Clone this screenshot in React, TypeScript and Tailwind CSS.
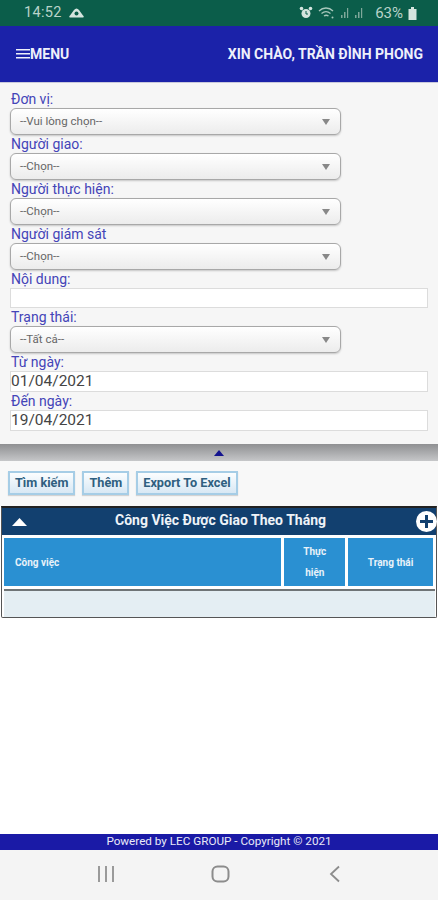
const font = { fontFamily: '"Roboto", "Liberation Sans", sans-serif' };

function Label({ children }: { children: React.ReactNode }) {
  return <div className="h-[18px] text-[14px] leading-[18px] text-[#4444b8] pl-[1px]">{children}</div>;
}

function Select({ text }: { text: string }) {
  return (
    <div className="w-[331px] h-[27px] rounded-[6px] border border-[#a8a8a8] bg-gradient-to-b from-white to-[#ececec] flex items-center justify-between pl-[9px] pr-[10px] shadow-[0_1px_2px_rgba(0,0,0,0.2)]">
      <span className="text-[11.5px] text-[#666]">{text}</span>
      <svg width="8" height="6" viewBox="0 0 8 6"><path d="M0 0h8L4 6z" fill="#888" /></svg>
    </div>
  );
}

function Input({ text, short }: { text?: string; short?: boolean }) {
  return (
    <div className={`w-[418px] ${short ? "h-[20px]" : "h-[21px]"} bg-white border border-[#dcdcdc] flex items-center text-[15.5px] text-[#444]`}>
      {text}
    </div>
  );
}

function Btn({ children }: { children: React.ReactNode }) {
  return (
    <div className="h-[24px] px-[5px] flex items-center border-2 border-[#a6cde6] bg-gradient-to-b from-[#fbfdfe] to-[#d8e8f4] text-[12.7px] font-bold text-[#2f5f80] shadow-[0_1px_1px_rgba(0,0,0,0.15)]">
      {children}
    </div>
  );
}

export default function App() {
  return (
    <div style={font} className="w-[438px] h-[900px] flex flex-col bg-white overflow-hidden">
      <div className="h-[26px] bg-[#0b5d4a] flex items-center justify-between pl-[24px] pr-[21px] text-[#b9d3c9]">
        <div className="flex items-center gap-[7px]">
          <span className="text-[14.5px] tracking-[0.3px]">14:52</span>
          <svg width="15" height="10" viewBox="0 0 15 10"><path d="M1 9.500C0 9.500 0 8 1 7.500L5 2C6.500 0 8.500 0 10 2L14 7.500C15 8 15 9.500 14 9.500z" fill="#d5e5df" /><circle cx="7.500" cy="5.500" r="2" fill="#0b5d4a" /></svg>
        </div>
        <div className="flex items-center gap-[5px]">
          <svg width="14" height="14" viewBox="0 0 14 14"><circle cx="7" cy="7.500" r="4.500" fill="#d5e5df" /><circle cx="2.500" cy="2.500" r="1.800" fill="#d5e5df" /><circle cx="11.500" cy="2.500" r="1.800" fill="#d5e5df" /><path d="M7 5v3h2" stroke="#0b5d4a" fill="none" /></svg>
          <svg width="17" height="13" viewBox="0 0 17 13" fill="none" stroke="#a9c8bc" strokeWidth="1.300"><path d="M1 4c4-4 10-4 14 0M3.500 6.500c3-2.500 6-2.500 9 0M6 9c1.500-1 3-1 4.500 0" /><circle cx="14.500" cy="10.500" r="1" fill="#a9c8bc" stroke="none" /></svg>
          <svg width="26" height="12" viewBox="0 0 26 12" fill="#7fa89a"><path d="M1 11h1.500V8H1zM4 11h1.500V5H4zM7 11h1.200V1H7zM15 11h1.500V8H15zM18 11h1.500V5H18zM21 11h1.200V1H21z" /></svg>
          <span className="text-[15px] ml-[4px]">63%</span>
          <svg width="9" height="13" viewBox="0 0 9 13"><path d="M3 0h3v2H3z" fill="#d5e5df" /><path d="M0.500 2h8v11h-8z" fill="#d5e5df" /></svg>
        </div>
      </div>

      <div className="h-[56px] bg-[#1b22a9] flex items-center justify-between pl-[16px] pr-[15px] text-[#eef0fb] font-bold">
        <div className="flex items-center text-[14px]">
          <svg width="14" height="12" viewBox="0 0 14 12" fill="#eef0fb"><path d="M0 1h14v1.600H0zM0 5h14v1.600H0zM0 9h14v1.600H0z" /></svg>
          <span>MENU</span>
        </div>
        <span className="text-[14px]">XIN CHÀO, TRẦN ĐÌNH PHONG</span>
      </div>

      <div className="h-[362px] bg-[#f6f6f6] px-[10px] pt-[7px] border-t border-[#c9c9dc]">
        <Label>Đơn vị:</Label>
        <Select text="--Vui lòng chọn--" />
        <Label>Người giao:</Label>
        <Select text="--Chọn--" />
        <Label>Người thực hiện:</Label>
        <Select text="--Chọn--" />
        <Label>Người giám sát</Label>
        <Select text="--Chọn--" />
        <Label>Nội dung:</Label>
        <Input short />
        <Label>Trạng thái:</Label>
        <Select text="--Tất cả--" />
        <Label>Từ ngày:</Label>
        <Input text="01/04/2021" />
        <Label>Đến ngày:</Label>
        <Input text="19/04/2021" />
      </div>

      <div className="h-[17px] bg-gradient-to-b from-[#8f9092] to-[#c6c7c9] flex items-center justify-center">
        <svg width="10" height="6" viewBox="0 0 10 6"><path d="M0 6 5 0l5 6z" fill="#14148f" /></svg>
      </div>

      <div className="h-[45px] bg-[#f8f8f8] flex items-center gap-[7px] pl-[8px] pb-[1px]">
        <Btn>Tìm kiếm</Btn>
        <Btn>Thêm</Btn>
        <Btn>Export To Excel</Btn>
      </div>

      <div className="h-[112px] mx-[1px] border border-[#555] border-t-2 border-t-[#222] rounded-b-[2px] flex flex-col bg-white">
        <div className="h-[27px] bg-[#12406f] relative flex items-center justify-center pb-[3px]">
          <span className="text-[14px] font-bold text-[#eef3f8] pl-[3px]">Công Việc Được Giao Theo Tháng</span>
          <svg className="absolute left-[10px] top-[10px]" width="15" height="8" viewBox="0 0 15 8"><path d="M0 8 7.500 0 15 8z" fill="#fff" /></svg>
          <svg className="absolute right-[-1px] top-[3px]" width="21" height="21" viewBox="0 0 21 21"><circle cx="10.500" cy="10.500" r="10.500" fill="#fff" /><path d="M9 4h3v5h5v3h-5v5H9v-5H4V9h5z" fill="#12406f" /></svg>
        </div>
        <div className="flex gap-[3px] pt-[3px] pl-[2px] pr-[3px] h-[51px]">
          <div className="w-[278px] bg-[#2a90d2] flex items-center pl-[11px] text-[10px] font-bold text-[#e8f2f9]">Công việc</div>
          <div className="w-[61px] bg-[#2a90d2] flex items-center justify-center text-center text-[10px] leading-[21px] font-bold text-[#e8f2f9]">Thực<br />hiện</div>
          <div className="w-[85px] bg-[#2a90d2] flex items-center justify-center text-[10px] font-bold text-[#e8f2f9]">Trạng thái</div>
        </div>
        <div className="flex-1 mt-[3px] ml-[2px] mr-[1px] border-t-2 border-[#6f7476] bg-[#e4eef3]" />
      </div>

      <div className="flex-1" />

      <div className="h-[16px] bg-[#1a1aa6] flex items-center justify-center text-[11.7px] text-[#e9e9f7]">
        Powered by LEC GROUP - Copyright © 2021
      </div>

      <div className="h-[50px] bg-[#f4f4f4] flex items-center pb-[2px]">
        <div className="w-[438px] flex items-center justify-center relative h-[20px]">
          <svg className="absolute left-[98px] top-[2px]" width="17" height="16" viewBox="0 0 17 16" fill="#9a9a9a"><path d="M0 0h2v16H0zM7 0h2v16H7zM14 0h2v16h-2z" /></svg>
          <svg className="absolute left-[211px] top-[1px]" width="19" height="18" viewBox="0 0 19 18" fill="none" stroke="#8c8c8c" strokeWidth="2"><rect x="1.500" y="1.500" width="16" height="15" rx="5" /></svg>
          <svg className="absolute left-[329px] top-[1px]" width="12" height="18" viewBox="0 0 12 18" fill="none" stroke="#8c8c8c" strokeWidth="1.800"><path d="M10 1.500 2 9l8 7.500" /></svg>
        </div>
      </div>
    </div>
  );
}
